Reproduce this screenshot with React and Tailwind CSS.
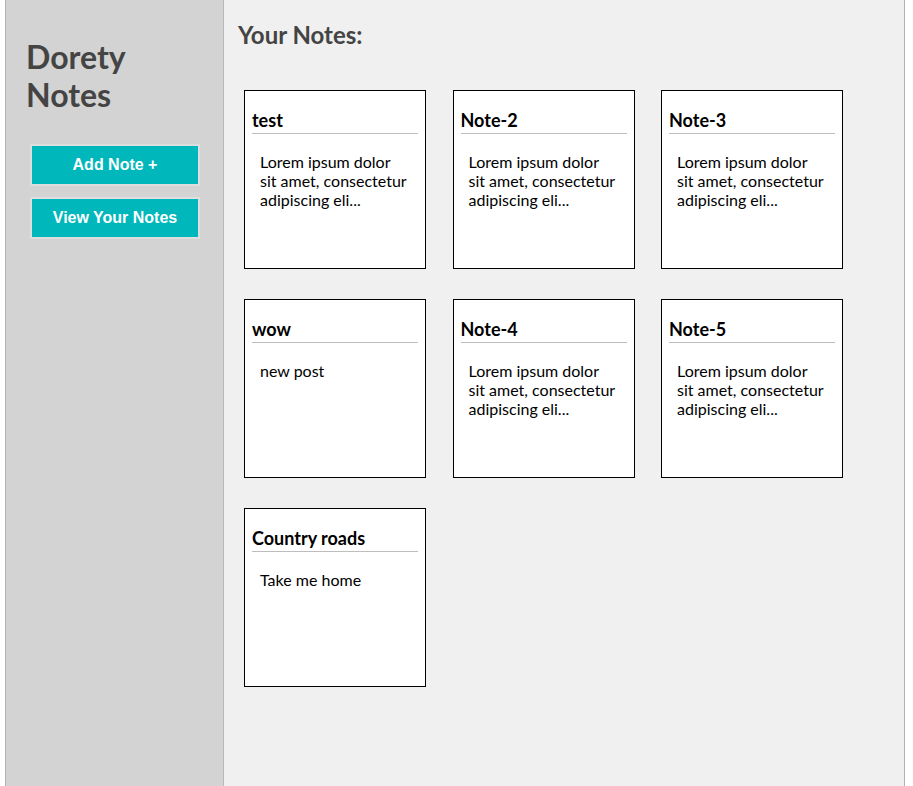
const notes = [
  { title: 'test', body: 'Lorem ipsum dolor sit amet, consectetur adipiscing eli...' },
  { title: 'Note-2', body: 'Lorem ipsum dolor sit amet, consectetur adipiscing eli...' },
  { title: 'Note-3', body: 'Lorem ipsum dolor sit amet, consectetur adipiscing eli...' },
  { title: 'wow', body: 'new post' },
  { title: 'Note-4', body: 'Lorem ipsum dolor sit amet, consectetur adipiscing eli...' },
  { title: 'Note-5', body: 'Lorem ipsum dolor sit amet, consectetur adipiscing eli...' },
  { title: 'Country roads', body: 'Take me home' },
];

function NoteCard({ title, body }) {
  return (
    <div className="w-[182px] h-[179px] bg-white border border-black px-[7px] pt-[19px]">
      <h3 className="text-[18px] leading-[1.2] font-bold text-black pb-[2px] border-b border-[#bdbdbd]">
        {title}
      </h3>
      <p className="mt-[18px] px-[8px] text-[16px] leading-[19px] text-black">{body}</p>
    </div>
  );
}

export default function App() {
  return (
    <div className="bg-white min-h-screen" style={{ fontFamily: 'Lato, "Noto Sans", sans-serif' }}>
      <div className="ml-[5px] w-[900px] h-[786px] flex border-l border-r border-[#b3b3b3] overflow-hidden">
        {/* Sidebar */}
        <aside className="w-[218px] shrink-0 bg-[#d3d3d3] border-r border-[#b8b8b8] pl-[20px] pt-[38px]">
          <h1 className="text-[32px] leading-[1.2] font-bold text-[#444444]">
            Dorety
            <br />
            Notes
          </h1>
          <div className="mt-[29px] ml-[4px] flex flex-col gap-[11px]">
            {['Add Note +', 'View Your Notes'].map((label) => (
              <button
                key={label}
                className="w-[170px] h-[42px] bg-[#00b7bb] border-2 border-[#dedede] text-white text-[16px] font-bold"
                style={{ fontFamily: '"Liberation Sans", Arial, sans-serif' }}
              >
                {label}
              </button>
            ))}
          </div>
        </aside>

        {/* Notes */}
        <main className="flex-1 bg-[#f0f0f0] pl-[14px] pt-[21px]">
          <h2 className="text-[24px] leading-[1.2] font-bold text-[#444444]">Your Notes:</h2>
          <div className="mt-[40px] ml-[6px] flex flex-wrap gap-x-[26.5px] gap-y-[30px] w-[620px]">
            {notes.map((n) => (
              <NoteCard key={n.title} {...n} />
            ))}
          </div>
        </main>
      </div>
    </div>
  );
}
